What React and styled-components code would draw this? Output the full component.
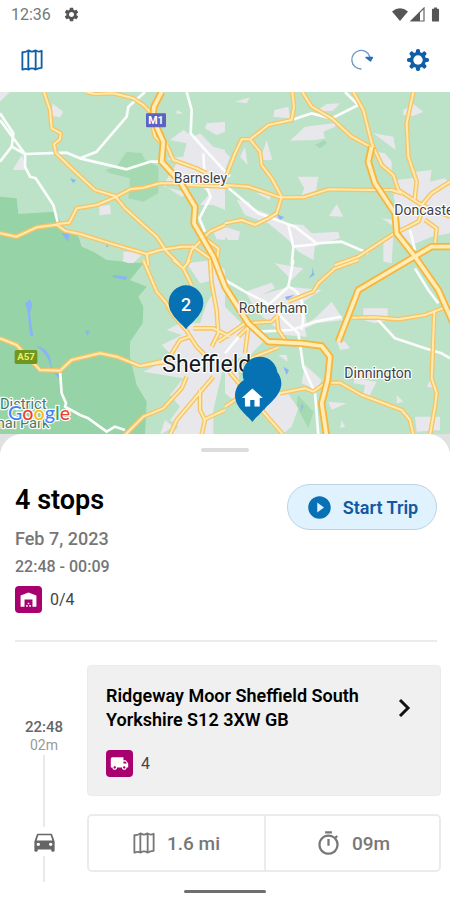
import React from "react";
import styled, { createGlobalStyle } from "styled-components";
import {
  MdSettings,
  MdBatteryFull,
  MdHome,
  MdLocalShipping,
  MdOutlineTimer,
  MdDirectionsCar,
  MdPlayCircleFilled,
  MdWarehouse,
} from "react-icons/md";

const GlobalStyle = createGlobalStyle`
  *, *::before, *::after { box-sizing: border-box; }
  body {
    margin: 0;
    background: #fff;
    color: #000;
    font-family: Roboto, "Liberation Sans", sans-serif;
  }
  button { font: inherit; color: inherit; cursor: pointer; }
  h1, h2, p, ul { margin: 0; padding: 0; }
  ul { list-style: none; }
`;

const Page = styled.div`
  display: flex;
  flex-direction: column;
  min-height: 100vh;
  background: #fff;
`;

const StatusBar = styled.div`
  display: flex;
  align-items: center;
  gap: 12px;
  height: 28px;
  padding: 0 6px 0 11px;
  font-size: 16px;
  color: #777;
`;

const StatusIcons = styled.div`
  display: flex;
  align-items: center;
  gap: 2px;
  margin-left: auto;
  color: #555;
`;

const Toolbar = styled.header`
  display: flex;
  align-items: center;
  gap: 30px;
  height: 64px;
  padding: 0 19px;
`;

const IconButton = styled.button`
  display: grid;
  place-items: center;
  width: 26px;
  height: 26px;
  padding: 0;
  margin-left: ${(p) => (p.$push ? "auto" : 0)};
  border: 0;
  background: none;
  color: #0f5ea8;
`;

const MapArea = styled.section`
  height: 342px;
  > svg { display: block; width: 100%; height: 100%; }
`;

const SheetBackdrop = styled.div`
  flex: 1;
  display: flex;
  background: #dfe2e0;
`;

const Sheet = styled.main`
  flex: 1;
  display: flex;
  flex-direction: column;
  padding: 14px 9px 7px;
  border-radius: 22px 22px 0 0;
  background: #fff;
`;

const Handle = styled.div`
  align-self: center;
  width: ${(p) => (p.$dark ? "82px" : "48px")};
  height: ${(p) => (p.$dark ? "3px" : "4px")};
  margin-top: ${(p) => (p.$dark ? "auto" : 0)};
  border-radius: 2px;
  background: ${(p) => (p.$dark ? "#6f6f6f" : "#dcdcdc")};
`;

const Summary = styled.section`
  display: flex;
  justify-content: space-between;
  align-items: flex-start;
  margin: 0 4px 0 6px;
  padding: 32px 0 27px;
  border-bottom: 2px solid #ebebeb;
`;

const Title = styled.h1`
  font-size: 27px;
  line-height: 32px;
  font-weight: 600;
`;

const DateText = styled.p`
  margin-top: 10px;
  font-size: 18px;
  line-height: 26px;
  font-weight: 500;
  color: #777;
`;

const TimeRange = styled.p`
  margin-top: 4px;
  font-size: 16px;
  line-height: 22px;
  font-weight: 500;
  color: #757575;
`;

const Count = styled.div`
  display: flex;
  align-items: center;
  gap: 8px;
  margin-top: ${(p) => (p.$spaced ? "18px" : "8px")};
  font-size: 16px;
  line-height: 27px;
  color: #444;
`;

const Badge = styled.span`
  display: grid;
  place-items: center;
  width: 27px;
  height: 27px;
  border-radius: 4px;
  background: #a8006e;
  color: #fff;
`;

const StartButton = styled.button`
  display: flex;
  align-items: center;
  justify-content: center;
  gap: 10px;
  width: 150px;
  height: 46px;
  padding: 0;
  border: 1px solid #bcd3df;
  border-radius: 23px;
  background: #e0f2fe;
  color: #1159a3;
  font-size: 18px;
  font-weight: 600;
  svg { color: #0870b4; }
`;

const StopList = styled.ul`
  padding: 23px 0 0 6px;
`;

const Stop = styled.li`
  display: grid;
  grid-template-columns: 58px 1fr;
  column-gap: 14px;
  row-gap: 18px;
`;

const Timeline = styled.div`
  grid-row: 1 / span 2;
  display: flex;
  flex-direction: column;
  align-items: center;
  padding-top: 53px;
  margin-bottom: -11px;
  color: #666;
`;

const ArrivalTime = styled.div`
  font-size: 15px;
  line-height: 18px;
  font-weight: 500;
`;

const Duration = styled.div`
  font-size: 14px;
  line-height: 18px;
  color: #999;
`;

const Line = styled.div`
  flex: ${(p) => (p.$end ? "0 0 26px" : "1")};
  width: 2px;
  margin: 1px 0;
  background: #e9e9e9;
`;

const StopCard = styled.button`
  display: flex;
  justify-content: space-between;
  align-items: flex-start;
  width: 100%;
  min-height: 131px;
  padding: 18px 28px 18px 18px;
  border: 1px solid #ebebeb;
  border-radius: 4px;
  background: #f0f0f0;
  text-align: left;
`;

const Address = styled.h2`
  max-width: 270px;
  font-size: 18px;
  line-height: 24px;
  font-weight: 600;
`;

const Chevron = styled.svg`
  margin-top: 14px;
`;

const Leg = styled.div`
  display: grid;
  grid-template-columns: 1fr 1fr;
  height: 58px;
  border: 2px solid #ebebeb;
  border-radius: 5px;
`;

const LegCell = styled.div`
  display: flex;
  align-items: center;
  justify-content: center;
  gap: 12px;
  font-size: 19px;
  font-weight: 500;
  color: #777;
  & + & { border-left: 2px solid #ebebeb; gap: 10px; }
`;

const FoldedMap = ({ size = 24, weight = 2 }) => (
  <svg width={size} height={size} viewBox="0 0 24 24" fill="none" stroke="currentColor" strokeWidth={weight} strokeLinejoin="round">
    <path d="M1.500 3.500C4 3.800 6 3 8 1.500C11 3.600 13 3.600 16 1.500C18 3 20 3.500 22.500 2V20.500C20 20.500 18 21 16 22.500C13 20.500 11 20.500 8 22.500C6 21 4 21.500 1.500 22.500Z" />
    <path d="M8 2V22M16 2V22" />
  </svg>
);

const Refresh = () => (
  <svg width="24" height="24" viewBox="0 0 24 24" fill="none" stroke="#7198c5" strokeWidth="1.400">
    <path d="M11.500 21A9.300 9.300 0 1 1 20 9" />
    <path d="M16 9.500H22.500L20.500 13Z" fill="#2b70b4" stroke="#2b70b4" strokeLinejoin="round" />
  </svg>
);

const Gear = () => (
  <svg width="24" height="24" viewBox="-12 -12 24 24" fill="currentColor">
    {[0, 45, 90, 135].map((a) => (
      <rect key={a} x="-2.100" y="-11" width="4.200" height="22" rx="1.800" transform={`rotate(${a})`} />
    ))}
    <circle r="8" />
    <circle r="4.700" fill="#fff" />
  </svg>
);

const Signal = () => (
  <svg width="15" height="15" viewBox="0 0 15 15">
    <path d="M1 14L14 1V14Z" fill="none" stroke="#666" strokeWidth="1.200" />
    <path d="M1 14L10 5V14Z" fill="#555" />
  </svg>
);

const Wifi = () => (
  <svg width="16" height="13" viewBox="0 0 16 13">
    <path d="M0 3.500Q8-3 16 3.500L8 13Z" fill="#555" />
  </svg>
);

const LAND = [
  [0, 0, "M0 320L50 325 55 372 165 365 190 410 235 440 245 470 280 485 320 510 430 520 410 545 390 570 440 590 415 620 430 650 428 700 390 755 390 800 410 885 440 935 435 1035 0 1035Z"],
];
const SHADE = [
  [0, 0, "M315 240L350 230 380 185 425 190 435 210 475 230 475 310 430 335 385 325 390 265 330 250Z"],
  [675, 0, "M270 165L300 150 305 160 285 175Z"],
  [675, 510, "M218 405L265 455 250 505 215 440Z"],
];
const TOWNS = [
  [0, 0, "M0 6H30L0 35Z M157 40L190 65 180 82 155 78Z M38 240L65 195 82 240Z M298 348L330 345 333 372 298 376Z M370 485H435L400 520 370 515Z M530 60L550 70 530 72Z M510 150L550 120 580 140 600 130 640 170 675 180V360L640 345 600 345 630 310 560 260 490 290 570 310 545 320 490 285 530 220 500 205 550 200 560 160Z M620 100L675 95V125L650 135 615 115Z M675 400L640 425 650 448 675 450Z"],
  [675, 0, "M30 35L75 22 65 40Z M148 60L190 50 195 85 145 80Z M270 65L305 42 345 40 325 62Z M195 152L240 110 325 100 340 90 330 110 295 125 300 145 270 150Z M445 130L505 140 512 180Z M535 60L565 42 595 65 565 78 535 75Z M455 185L480 190 500 215 500 240 515 270 560 265 575 245 620 240 615 275 660 265 675 280V430L620 440 560 465 530 435 520 370 505 320 520 280 490 240Z M0 185L15 200 0 240Z M105 210L125 150 142 210Z M60 170L68 225 45 200Z M218 260L280 260 270 320 230 315 238 295Z M95 310L138 310 135 330Z M312 378L335 342 355 380Z M35 330L70 335 85 355 150 380 170 400 235 405 260 430 340 425 345 445 270 465 265 510 220 485 190 450 130 400 60 375Z M475 450L505 440 500 520 475 515Z M0 410L45 425 40 450 10 450 0 440Z M470 385L510 390 505 408Z"],
  [0, 510, "M560 10L640 0 675 30 675 300 640 450 640 525 510 525 535 500 510 480 540 440 510 405 550 355 430 335 520 290 485 255 545 225 500 210 540 190 600 190 620 130 640 100 640 60 600 70Z M365 0H405L385 10Z M495 480L520 500 480 525Z"],
  [675, 510, "M60 95L140 68 150 85 110 105 190 80 235 85 290 90 235 125 245 190 270 175 320 125 355 180 275 190 240 205 245 230 180 225 100 160Z M150 10L235 25 200 60Z M0 140L60 200 120 240 95 265 70 290 0 300Z M415 145H488V180L450 190 415 180Z M160 285L185 285 188 305Z M335 240L360 245 375 265 345 270Z M240 315L290 360 275 390 230 370Z M390 355L455 365 435 405H415L420 375 385 370Z M605 380L620 355 630 385Z M570 470H645V510L575 515Z M310 425L365 430 320 450Z M345 505L350 480 360 500Z M515 430V405L535 425Z M110 400L185 395 220 445 200 500 170 525 145 500 100 440Z M0 340L40 330 50 440 0 400Z"],
];
const WATER = [
  [0, 0, "M210 265L228 270 220 280Z M185 430H210L203 455Z M320 462L325 470 318 470Z"],
  [675, 0, "M155 372L178 382 165 390Z"],
  [0, 510, "M75 130L90 118 97 135 90 160 100 230 90 225 82 150Z M108 258Q135 258 150 290L155 320 180 345 175 355 155 330Q145 280 108 258Z M338 45L382 50 378 60 340 52Z M255 210L270 215 262 227Z"],
  [675, 510, "M180 110L210 104 185 120Z M175 320L192 330 185 345Z M230 430L235 440 228 455Z M262 20L268 45 250 55 262 40Z"],
];
const LANES = [
  [0, 0, "M435 6L385 50 380 80 290 185 240 205 380 238 450 215 490 215 M75 192L200 188 240 205 M0 70L20 100 40 130 35 170 0 215 M0 90L75 192 M35 170L75 192 75 230 90 260 107 265 160 345 175 405 M560 6L575 60 572 130 625 190 690 260 M610 190L615 280 632 320 598 385 615 425"],
  [675, 0, "M360 6L400 45 320 85 260 70 200 90 M0 285L100 370 210 410 275 460 350 455 430 490 M190 405L205 470 280 462 M205 470L200 525 M555 420L570 480"],
  [0, 510, "M180 332L185 400 198 430 195 440 240 465 265 475 320 515 345 500 375 510"],
  [675, 510, "M0 60L60 95 120 125 220 220 235 320 270 400 280 525 M205 0L190 80 130 135 M190 80Q250 100 230 210 M100 215L200 210 270 185 350 170 M450 170L510 235 600 265 650 280 675 295 M570 25L610 90 640 130 M0 280L50 220"],
];
const ROADS = [
  [0, 0, "M132 6L150 60 155 115 182 130 180 148 162 162 168 190 220 240 285 300 345 318 375 355 430 405 470 440 500 485 540 525 M170 402L208 398 230 355 290 345 345 322 390 298 430 293 480 280 545 280 M258 6L285 12 340 10 400 25 430 45 455 70 M440 490L445 525 M675 405L630 425 575 480 560 525 M500 165L520 210 590 235 620 250 M560 285L685 290 M0 430L50 440 110 412 170 404 195 422 240 432 330 460 440 492 480 480 545 470 580 470 630 505 M455 95L465 140 480 155 M600 435L655 475 650 520"],
  [675, 0, "M202 6L207 50 200 90 130 105 75 148 50 148 30 190 5 255 M75 148L105 185 110 225 140 265 170 320 155 370 130 385 90 405 50 390 0 400 M0 285L70 290 165 322 235 322 310 298 440 300 500 300 530 310 M232 6L260 50 320 85 380 140 435 170 M385 6L415 60 440 160 470 225 505 255 520 300 590 345 M565 6L545 100 550 200 575 275 568 335 M675 275L620 310 590 345 675 380 M330 525L400 500 500 435 580 395 600 345 M600 390L635 415 630 460"],
  [0, 510, "M430 0L470 95 500 130 515 160 558 210 590 260 630 300 M520 0L550 25 575 75 M570 0L550 25 M0 235L50 255 120 330 180 332 215 300 300 280 350 290 420 318 500 305 540 240 570 230 M630 0L635 70 650 150 655 220 635 260 M580 205L640 205 690 230 M375 525L430 470 490 445 545 385 560 350 M510 525L530 480 640 350 M600 390L600 450 615 480 605 525 M610 480L675 450 M420 318L500 300"],
  [675, 510, "M400 0L330 25 280 70 265 95 190 125 M380 173L450 172 520 178 600 165 660 142 M628 150L620 355 635 400 630 440 615 525 M310 368L345 368 410 405 530 450 555 480 565 525 M165 400L240 385 265 395 300 370 M-20 245L60 190 140 185 160 165 M155 165L160 210 180 240 M40 310L160 262 M110 450L175 525 M0 440L60 400 M40 230L70 200 60 280 M0 320L50 380"],
];
const MOTORWAYS = [
  [0, 0, "M485 6L462 50 458 85 490 155 485 215 540 275 585 350 582 400 640 500 675 590 745 700 805 755 905 760 965 768 990 800 983 870 965 940 980 1040"],
  [675, 0, "M440 170L430 215 450 280 510 370 515 430 570 500 640 600 685 700 M675 470L620 470 560 505 400 600 340 755"],
];

const Shapes = ({ data, ...rest }) => (
  <g {...rest}>
    {data.map(([x, y, d], i) => (
      <path key={i} d={d} transform={`translate(${x} ${y})`} />
    ))}
  </g>
);

const stroke = { fill: "none", strokeLinejoin: "round" };
const GOOGLE = [["G", "#4285f4"], ["o", "#ea4335"], ["o", "#fbbc05"], ["g", "#4285f4"], ["l", "#34a853"], ["e", "#ea4335"]];
const PIN = "M0 0C-12-18-52-42-52-80A52 52 0 0 1 52-80C52-42 12-18 0 0Z";

const TripMap = () => (
  <svg viewBox="0 6 1350 1026" preserveAspectRatio="xMidYMid slice" role="img" aria-label="Map of stops around Sheffield" fontFamily="Roboto, sans-serif">
    <rect y="6" width="1350" height="1026" fill="#bce3c7" />
    <Shapes data={LAND} fill="#96d3a6" />
    <Shapes data={SHADE} fill="#a4d9b1" />
    <Shapes data={TOWNS} fill="#e8e7eb" />
    <Shapes data={WATER} fill="#8ab4f8" />
    <Shapes data={LANES} stroke="#fafdfb" strokeWidth="8" {...stroke} />
    <Shapes data={ROADS} stroke="#f6c465" strokeWidth="14" {...stroke} />
    <Shapes data={ROADS} stroke="#ffeab0" strokeWidth="6" {...stroke} />
    <Shapes data={MOTORWAYS} stroke="#f7b53e" strokeWidth="22" {...stroke} />
    <Shapes data={MOTORWAYS} stroke="#ffedb5" strokeWidth="11" {...stroke} />
    <rect x="438" y="70" width="60" height="42" rx="3" fill="#5f62c0" />
    <text x="468" y="103" fontSize="32" fontWeight="700" fill="#fff" textAnchor="middle">M1</text>
    <rect x="44" y="780" width="68" height="42" rx="5" fill="#6f9620" />
    <text x="78" y="811" fontSize="29" fontWeight="700" fill="#f5ee59" textAnchor="middle">A57</text>
    <g fill="#3f4246" stroke="#fff" strokeWidth="7" strokeLinejoin="round" paintOrder="stroke" fontSize="42">
      <text x="521" y="280">Barnsley</text>
      <text x="1183" y="375">Doncaster</text>
      <text x="716" y="670">Rotherham</text>
      <text x="1033" y="863">Dinnington</text>
      <text x="487" y="845" fontSize="69" fill="#17191b">Sheffield</text>
      <text x="0" y="956" fontSize="44" fill="#4c7760">District</text>
      <text x="-10" y="1014" fontSize="44" fill="#4c7760">nal Park</text>
    </g>
    <text x="24" y="990" fontSize="59" fontWeight="500" stroke="#fff" strokeWidth="7" paintOrder="stroke" fontFamily="Lato, sans-serif">
      {GOOGLE.map(([c, fill], i) => <tspan key={i} fill={fill}>{c}</tspan>)}
    </text>
    <g fill="#0672b4">
      <path d={PIN} transform="translate(558 718)" />
      <path d={PIN} transform="translate(780 932)" />
      <path d={PIN} transform="translate(792 960)" />
      <path d={PIN} transform="translate(757 996)" />
    </g>
    <text x="558" y="663" fontSize="54" fontWeight="500" fill="#fff" textAnchor="middle">2</text>
    <MdHome x="719" y="886" size={76} color="#fff" />
  </svg>
);

export default function App() {
  return (
    <Page>
      <GlobalStyle />
      <StatusBar>
        <span>12:36</span>
        <MdSettings size={17} color="#555" />
        <StatusIcons>
          <Wifi />
          <Signal />
          <MdBatteryFull size={17} />
        </StatusIcons>
      </StatusBar>
      <Toolbar>
        <IconButton aria-label="Map"><FoldedMap size={22} /></IconButton>
        <IconButton aria-label="Refresh" $push><Refresh /></IconButton>
        <IconButton aria-label="Settings"><Gear /></IconButton>
      </Toolbar>
      <MapArea><TripMap /></MapArea>
      <SheetBackdrop>
        <Sheet>
          <Handle />
          <Summary>
            <div>
              <Title>4 stops</Title>
              <DateText>Feb 7, 2023</DateText>
              <TimeRange>22:48 - 00:09</TimeRange>
              <Count><Badge><MdWarehouse size={19} /></Badge>0/4</Count>
            </div>
            <StartButton><MdPlayCircleFilled size={27} />Start Trip</StartButton>
          </Summary>
          <StopList>
            <Stop>
              <Timeline>
                <ArrivalTime>22:48</ArrivalTime>
                <Duration>02m</Duration>
                <Line />
                <MdDirectionsCar size={27} />
                <Line $end />
              </Timeline>
              <StopCard>
                <div>
                  <Address>Ridgeway Moor Sheffield South Yorkshire S12 3XW GB</Address>
                  <Count $spaced><Badge><MdLocalShipping size={19} /></Badge>4</Count>
                </div>
                <Chevron width="14" height="20" viewBox="0 0 14 20" fill="none" stroke="#111" strokeWidth="3">
                  <path d="M2 2L10 10L2 18" />
                </Chevron>
              </StopCard>
              <Leg>
                <LegCell><FoldedMap size={22} weight={2} />1.6 mi</LegCell>
                <LegCell><MdOutlineTimer size={27} />09m</LegCell>
              </Leg>
            </Stop>
          </StopList>
          <Handle $dark />
        </Sheet>
      </SheetBackdrop>
    </Page>
  );
}
